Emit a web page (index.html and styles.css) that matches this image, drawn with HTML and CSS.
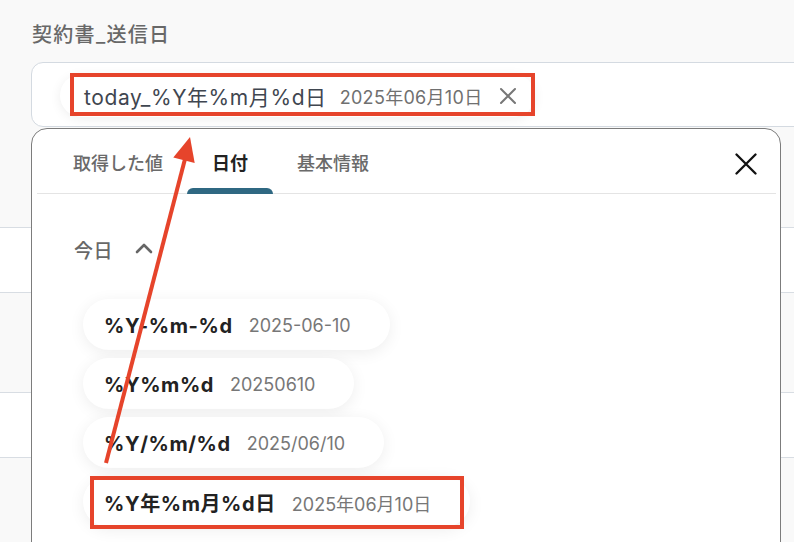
FILE: index.html
```html
<!DOCTYPE html>
<html lang="ja">
<head>
<meta charset="utf-8">
<title>契約書_送信日</title>
<link rel="stylesheet" href="styles.css">
</head>
<body>
<div class="page">
  <div class="label">契約書_送信日</div>
  <div class="field">
    <div class="chip">
      <span class="chip-main">today_%Y年%m月%d日</span>
      <span class="chip-sub">2025年06月10日</span>
      <svg class="chip-x" width="18" height="18" viewBox="0 0 18 18"><path d="M2 2 L16 16 M16 2 L2 16" stroke="#777" stroke-width="2" stroke-linecap="round" fill="none"/></svg>
    </div>
  </div>
  <div class="rows">
    <div class="row row-a"></div>
    <div class="row row-b"></div>
    <div class="row row-c"></div>
    <div class="row row-d"></div>
    <div class="row row-e"></div>
  </div>

  <div class="popup">
    <div class="tabs">
      <div class="tab">取得した値</div>
      <div class="tab tab-active">日付</div>
      <div class="tab">基本情報</div>
      <svg class="close" width="22" height="22" viewBox="0 0 22 22"><path d="M1.5 1.5 L20.5 20.5 M20.5 1.5 L1.5 20.5" stroke="#111" stroke-width="2.3" stroke-linecap="round" fill="none"/></svg>
    </div>
    <div class="section">
      <div class="section-head">
        <span>今日</span>
        <svg width="18" height="12" viewBox="0 0 18 12"><path d="M2 10 L9 3 L16 10" stroke="#666" stroke-width="2.6" stroke-linecap="round" stroke-linejoin="round" fill="none"/></svg>
      </div>
      <div class="pills">
        <div class="pill"><span class="pill-main">%Y-%m-%d</span><span class="pill-sub">2025-06-10</span></div>
        <div class="pill"><span class="pill-main">%Y%m%d</span><span class="pill-sub">20250610</span></div>
        <div class="pill"><span class="pill-main">%Y/%m/%d</span><span class="pill-sub">2025/06/10</span></div>
        <div class="pill"><span class="pill-main">%Y年%m月%d日</span><span class="pill-sub">2025年06月10日</span></div>
      </div>
    </div>
  </div>

  <div class="mark mark-chip"></div>
  <div class="mark mark-pill"></div>
  <svg class="arrow" width="794" height="542" viewBox="0 0 794 542">
    <line x1="106" y1="463" x2="185" y2="159" stroke="#e6442b" stroke-width="4"/>
    <polygon points="190,137 173.3,157.5 194.7,162.9" fill="#e6442b"/>
  </svg>
</div>
</body>
</html>
```

FILE: styles.css
```css
html, body {
  margin: 0;
  padding: 0;
}
body {
  background: #f9f9f9;
  font-family: "Inter", "Noto Sans CJK JP", sans-serif;
  overflow: hidden;
  width: 794px;
  height: 542px;
}
.page {
  position: relative;
  width: 794px;
  height: 542px;
  overflow: hidden;
}
.label {
  padding: 22px 0 0 32px;
  height: 26px;
  line-height: 26px;
  font-size: 20px;
  font-weight: 500;
  color: #686868;
  letter-spacing: 1.3px;
  margin-bottom: 14px;
}
.field {
  margin-left: 31px;
  width: 800px;
  height: 63px;
  border: 1px solid #d4dae1;
  border-radius: 12px;
  background: #fff;
  box-sizing: content-box;
  padding-left: 28px;
}
.chip {
  margin-top: 11px;
  height: 43px;
  width: 475px;
  box-sizing: border-box;
  display: flex;
  align-items: center;
  padding-left: 24px;
  background: #fff;
  border-radius: 22px;
  box-shadow: 0 2px 12px rgba(0, 0, 0, 0.07);
}
.chip-main {
  font-size: 21px;
  color: #3f4650;
  letter-spacing: 0.6px;
}
.chip-sub {
  margin-left: 13px;
  font-size: 18px;
  color: #707070;
  letter-spacing: 0.3px;
}
.chip-x {
  margin-left: 17px;
}
.rows .row {
  border-bottom: 1px solid #d8dde3;
}
.row-a { height: 100px; background: #f9f9f9; }
.row-b { height: 64px; background: #fff; }
.row-c { height: 99px; background: #f9f9f9; }
.row-d { height: 64px; background: #fff; }
.row-e { height: 100px; background: #f9f9f9; border-bottom: none; }

.popup {
  position: absolute;
  left: 31px;
  top: 128px;
  width: 750px;
  height: 480px;
  box-sizing: border-box;
  border: 1px solid #7c7c7c;
  border-radius: 16px;
  background: #fff;
}
.tabs {
  display: flex;
  align-items: flex-start;
  height: 65px;
  margin: 0 4px 0 5px;
  padding-left: 12px;
  border-bottom: 1px solid #e4e4e4;
  box-sizing: border-box;
}
.tab {
  position: relative;
  height: 65px;
  box-sizing: border-box;
  padding: 23px 24px 0;
  line-height: 24px;
  font-size: 18px;
  color: #6a6a6a;
  font-weight: 500;
}
.tab-active {
  color: #222;
  font-weight: 600;
  padding: 23px 25px 0;
}
.tab-active::after {
  content: "";
  position: absolute;
  left: 0;
  right: 0;
  bottom: 0;
  height: 6px;
  background: #2f6882;
  border-radius: 6px 6px 0 0;
}
.close {
  margin-left: auto;
  margin-right: 19px;
  margin-top: 24px;
}
.section {
  padding: 43px 0 0 42px;
}
.section-head {
  display: flex;
  align-items: center;
  height: 24px;
  font-size: 19px;
  color: #686868;
  letter-spacing: 0.5px;
  font-weight: 500;
}
.section-head svg {
  margin-left: 22px;
  margin-top: -2px;
}
.pills {
  margin-top: 38px;
  margin-left: 9px;
  display: flex;
  flex-direction: column;
  align-items: flex-start;
  gap: 8px;
}
.pill {
  height: 51px;
  display: flex;
  align-items: center;
  padding: 2px 39px 0 21px;
  box-sizing: border-box;
  background: #fff;
  border-radius: 26px;
  box-shadow: 0 3px 16px rgba(0, 0, 0, 0.07);
}
.pill-main {
  font-size: 20px;
  font-weight: 700;
  color: #222;
  letter-spacing: 0.6px;
}
.pill-sub {
  margin-left: 16px;
  font-size: 18px;
  color: #777;
}
.mark {
  position: absolute;
  box-sizing: border-box;
  border: 4px solid #e6442b;
}
.mark-chip {
  left: 70px;
  top: 73px;
  width: 465px;
  height: 43px;
}
.mark-pill {
  left: 90px;
  top: 476px;
  width: 374px;
  height: 53px;
}
.arrow {
  position: absolute;
  left: 0;
  top: 0;
  pointer-events: none;
}
```
